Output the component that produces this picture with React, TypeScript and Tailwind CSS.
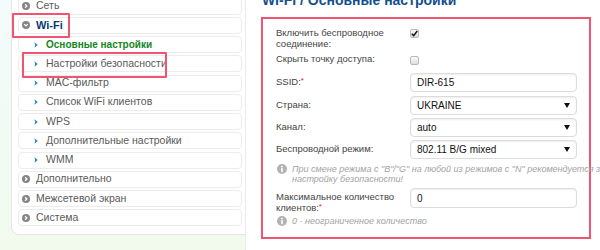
import React from "react"

type NavItem = { label: string; level: 0 | 1; open?: boolean; active?: boolean; strong?: boolean }

const nav: NavItem[] = [
  { label: "Сеть", level: 0 },
  { label: "Wi-Fi", level: 0, open: true, strong: true },
  { label: "Основные настройки", level: 1, active: true },
  { label: "Настройки безопасности", level: 1 },
  { label: "MAC-фильтр", level: 1 },
  { label: "Список WiFi клиентов", level: 1 },
  { label: "WPS", level: 1 },
  { label: "Дополнительные настройки", level: 1 },
  { label: "WMM", level: 1 },
  { label: "Дополнительно", level: 0 },
  { label: "Межсетевой экран", level: 0 },
  { label: "Система", level: 0 },
]

function CircleArrow({ open }: { open?: boolean }) {
  return (
    <svg width="8" height="8" viewBox="0 0 8 8" className="shrink-0">
      <circle cx="4" cy="4" r="4" fill="#858585" />
      {open ? (
        <path d="M2.2 3.1 L4 4.9 L5.8 3.1" stroke="#fff" strokeWidth="1.3" fill="none" />
      ) : (
        <path d="M3.1 2.2 L4.9 4 L3.1 5.8" stroke="#fff" strokeWidth="1.3" fill="none" />
      )}
    </svg>
  )
}

function Bullet() {
  return (
    <svg width="4" height="6" viewBox="0 0 4 6" className="shrink-0">
      <path d="M0.3 0.3 L3.8 3 L0.3 5.7 L1.3 3 Z" fill="#1b84c4" />
    </svg>
  )
}

function Info() {
  return (
    <svg width="10" height="10" viewBox="0 0 10 10" className="shrink-0">
      <circle cx="5" cy="5" r="5" fill="#b3b3b3" />
      <circle cx="5" cy="2.6" r="0.9" fill="#fff" />
      <rect x="4.2" y="4.1" width="1.6" height="4" fill="#fff" />
    </svg>
  )
}

function Arrow() {
  return (
    <svg width="6" height="5" viewBox="0 0 6 5" className="shrink-0">
      <path d="M0 0 H6 L3 5 Z" fill="#111" />
    </svg>
  )
}

function Checkbox({ checked }: { checked?: boolean }) {
  return (
    <div className="w-[9px] h-[9px] rounded-[2px] border border-[#b9b9b9] bg-gradient-to-b from-[#fafafa] to-[#dedede] flex items-center justify-center">
      {checked && (
        <svg width="7" height="7" viewBox="0 0 7 7">
          <path d="M0.8 3.8 L2.7 5.6 L6.2 1" stroke="#111" strokeWidth="1.5" fill="none" />
        </svg>
      )}
    </div>
  )
}

function Field({ value, select, h = "h-[19px]" }: { value: string; select?: boolean; h?: string }) {
  return (
    <div
      className={`w-[167px] ${h} rounded-[4px] border border-[#dcdcdc] bg-white shadow-[inset_0_1px_2px_rgba(0,0,0,0.07)] flex items-center justify-between pl-[6px] pr-[6px] text-[10px] text-[#111]`}
    >
      <span>{value}</span>
      {select && <Arrow />}
    </div>
  )
}

function Req() {
  return <span className="text-[#e3173e] text-[8px] align-top relative top-[-1px]">*</span>
}

export default function App() {
  return (
    <div className="w-[600px] h-[250px] overflow-hidden bg-white font-[Liberation_Sans,Arial,sans-serif] relative">
      <div className="flex -mt-[12px] h-[274px]">
        {/* sidebar */}
        <aside className="w-[245px] pl-[11px] bg-gradient-to-b from-[#f3fbfd] to-[#f1faec] shrink-0">
          <div className="bg-white border-l border-b border-t border-[#e6e6e6] rounded-bl-[8px] pl-[6px] pr-[3px] pt-[8.5px] pb-[5.5px]">
            {nav.map((n) => (
              <div
                key={n.label}
                className={`h-[17px] mb-[2.25px] rounded-[4px] border border-[#ececec] bg-white flex items-center text-[10.5px] ${
                  n.level === 0 ? "pl-[3px] gap-[6px]" : "pl-[15px] gap-[8px]"
                }`}
              >
                {n.level === 0 ? <CircleArrow open={n.open} /> : <Bullet />}
                <span
                  className={
                    n.strong
                      ? "font-bold text-[#0b3c6f] text-[11px]"
                      : n.active
                        ? "font-bold text-[#14871b] text-[10px]"
                        : "text-[#5a5a5a]"
                  }
                >
                  {n.label}
                </span>
              </div>
            ))}
          </div>
        </aside>

        {/* main */}
        <main className="flex-1 border-l border-[#ececec] pl-[15px] pt-[4px]">
          <h1 className="pl-[1px] text-[14px] leading-[17px] font-bold text-[#144f8e] whitespace-nowrap mb-[8px]">
            Wi-Fi / Основные настройки
          </h1>

          <div className="w-[330px] border-2 border-[#f05470] bg-white pl-[13px] pt-[8px] pb-[11px] text-[9.5px] text-[#444]">
            <div className="flex">
              <div className="w-[134px] leading-[11px]">
                Включить беспроводное
                <br />
                соединение:
              </div>
              <div className="mt-[2px]">
                <Checkbox checked />
              </div>
            </div>

            <div className="flex mt-[4px]">
              <div className="w-[134px] leading-[11px]">Скрыть точку доступа:</div>
              <div className="mt-[3px]">
                <Checkbox />
              </div>
            </div>

            <div className="flex items-center mt-[8px]">
              <div className="w-[134px] leading-[11px] -mt-[3px]">
                SSID:
                <Req />
              </div>
              <Field value="DIR-615" />
            </div>

            <div className="flex items-center mt-[4px]">
              <div className="w-[134px] leading-[11px] -mt-[3px]">Страна:</div>
              <Field value="UKRAINE" select />
            </div>

            <div className="flex items-center mt-[3px]">
              <div className="w-[134px] leading-[11px] -mt-[3px]">Канал:</div>
              <Field value="auto" select />
            </div>

            <div className="flex items-center mt-[3px]">
              <div className="w-[134px] leading-[11px] -mt-[2px]">Беспроводной режим:</div>
              <Field value="802.11 B/G mixed" select />
            </div>

            <div className="flex gap-[5px] mt-[5px] pl-[1px] text-[9px] leading-[10px] italic text-[#a3a3a3] whitespace-nowrap">
              <Info />
              <div>
                При смене режима с "B"/"G" на любой из режимов с "N" рекомендуется заменить
                <br />
                настройку безопасности!
              </div>
            </div>

            <div className="flex mt-[4px]">
              <div className="w-[134px] leading-[11px] pt-[3px]">
                Максимальное количество
                <br />
                клиентов:
                <Req />
              </div>
              <Field value="0" h="h-[20px]" />
            </div>

            <div className="flex gap-[5px] mt-[3px] pl-[1px] text-[9px] leading-[10px] italic text-[#a3a3a3] whitespace-nowrap">
              <Info />
              <div>0 - неограниченное количество</div>
            </div>
          </div>
        </main>
      </div>

      {/* annotation boxes over the menu */}
      <div className="absolute left-[12px] top-[13px] w-[58px] h-[25px] border-2 border-[#f05470] rounded-[1px]" />
      <div className="absolute left-[22px] top-[52px] w-[145px] h-[26px] border-2 border-[#f05470] rounded-[1px]" />
    </div>
  )
}
